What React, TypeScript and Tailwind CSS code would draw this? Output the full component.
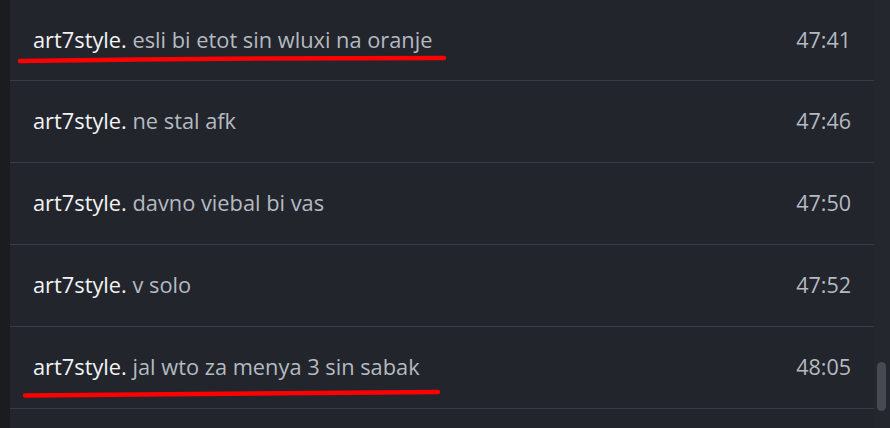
const rows = [
  { user: "art7style.", text: "esli bi etot sin wluxi na oranje", time: "47:41" },
  { user: "art7style.", text: "ne stal afk", time: "47:46" },
  { user: "art7style.", text: "davno viebal bi vas", time: "47:50" },
  { user: "art7style.", text: "v solo", time: "47:52" },
  { user: "art7style.", text: "jal wto za menya 3 sin sabak", time: "48:05" },
];

export default function App() {
  return (
    <div className="relative flex h-[428px] w-[890px] overflow-hidden bg-[#22252c]">
      <div className="w-[10px] shrink-0 bg-[#1b1c20]" />
      <div className="flex w-[864px] shrink-0 flex-col">
        {rows.map((r, i) => (
          <div
            key={i}
            className={`flex shrink-0 items-center justify-between border-b border-[#393c44] pl-[23px] pr-[23px] ${i === 0 ? "h-[81px]" : "h-[82px]"}`}
          >
            <div className="font-['Open_Sans',sans-serif] text-[21.8px]">
              <span className="text-[#f2f3f5]">{r.user}</span>{" "}
              <span className="text-[#b5bac1]">{r.text}</span>
            </div>
            <div className="font-['Open_Sans',sans-serif] text-[21.5px] text-[#b5bac1]">{r.time}</div>
          </div>
        ))}
      </div>
      <div className="relative flex-1 bg-[#24272e]">
        <div className="absolute left-[3px] top-[362px] h-[49px] w-[9px] rounded-full bg-[#474a52]" />
      </div>
      <svg className="pointer-events-none absolute left-0 top-0" width="890" height="428">
        <path d="M20 61 Q230 58 444 58" stroke="#ff0000" strokeWidth="4.5" strokeLinecap="round" fill="none" />
        <path d="M25 395.5 Q230 393 438 392" stroke="#ff0000" strokeWidth="4.5" strokeLinecap="round" fill="none" />
      </svg>
    </div>
  );
}
